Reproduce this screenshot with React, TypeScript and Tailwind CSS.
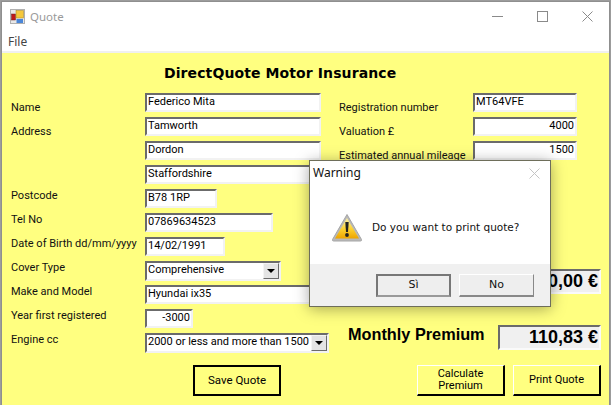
const sans = "font-['Liberation_Sans',Arial,sans-serif]";

const field =
  "h-[19px] bg-white border-2 border-t-[#6b6b6b] border-l-[#6b6b6b] border-r-[#f2f2f2] border-b-[#f2f2f2] text-[11px] leading-[13px] text-black px-px whitespace-nowrap overflow-hidden font-['Roboto',sans-serif]";

const rows = [
  { label: "Name", labelTop: "mt-[7px]", value: "Federico Mita", width: "w-[176px]" },
  { label: "Address", labelTop: "mt-[7px]", value: "Tamworth", width: "w-[176px]" },
  { label: "", labelTop: "mt-0", value: "Dordon", width: "w-[176px]" },
  { label: "", labelTop: "mt-0", value: "Staffordshire", width: "w-[176px]" },
  { label: "Postcode", labelTop: "-mt-px", value: "B78 1RP", width: "w-[72px]" },
  { label: "Tel No", labelTop: "-mt-px", value: "07869634523", width: "w-[128px]" },
  { label: "Date of Birth dd/mm/yyyy", labelTop: "-mt-px", value: "14/02/1991", width: "w-[80px]" },
];

function ComboArrow() {
  return (
    <div className="absolute right-0 top-0 w-[16px] h-[16px] bg-[#e4e4e4] border border-t-[#f4f4f4] border-l-[#f4f4f4] border-r-[#6b6b6b] border-b-[#6b6b6b] flex items-center justify-center">
      <svg width="8" height="4" viewBox="0 0 8 4">
        <path d="M0 0h8L4 4z" fill="#000" />
      </svg>
    </div>
  );
}

function Combo({ value, width }: { value: string; width: string }) {
  return (
    <div className={`relative ${field} h-[20px] ${width}`}>
      {value}
      <ComboArrow />
    </div>
  );
}

function Row({ label, labelTop, children }: { label: string; labelTop: string; children: React.ReactNode }) {
  return (
    <div className="flex items-start h-[24px]">
      <div className={`w-[134px] shrink-0 text-[11px] leading-[16px] whitespace-nowrap ${labelTop}`}>{label}</div>
      {children}
    </div>
  );
}

function WarningIcon() {
  return (
    <svg width="32" height="29" viewBox="0 0 32 29" className="shrink-0">
      <defs>
        <linearGradient id="warn" x1="0" y1="0" x2="0" y2="1">
          <stop offset="0" stopColor="#fff3a8" />
          <stop offset="0.55" stopColor="#fbd030" />
          <stop offset="1" stopColor="#eda400" />
        </linearGradient>
      </defs>
      <path d="M16 1.5 30.5 26.5a1 1 0 0 1-1 1.5H2.5a1 1 0 0 1-1-1.5z" fill="#b9b9b9" stroke="#a6a6a6" />
      <path d="M16 5 28 25.5H4z" fill="url(#warn)" />
      <path d="M14.3 9h3.4l-.7 10h-2z" fill="#222" />
      <circle cx="16" cy="22" r="1.9" fill="#222" />
    </svg>
  );
}

export default function App() {
  return (
    <div className={`relative w-[611px] h-[405px] overflow-hidden bg-[#9c9c9c] pt-px pl-px ${sans}`}>
      <div className="relative w-[609px] h-[404px] border-t border-l border-r border-[#8f8f8f] bg-white">
        {/* Title bar */}
        <div className="h-[28px] flex items-center pl-[8px] pr-[16px]">
          <svg width="15" height="15" viewBox="0 0 15 15" className="shrink-0">
            <rect x="0.5" y="0.5" width="14" height="14" fill="#e8e8e8" stroke="#b0b0b0" />
            <rect x="1.5" y="5" width="4" height="6" fill="#c01818" stroke="#6a2020" strokeWidth="0.5" />
            <rect x="6" y="1.5" width="7.5" height="7.5" fill="#f5c83c" stroke="#a08020" strokeWidth="0.5" />
            <rect x="6.5" y="10" width="6.5" height="4" fill="#4a86d8" />
          </svg>
          <span className="ml-[5px] mt-[2px] text-[11.5px] text-[#9a9a9a] font-['Noto_Sans',sans-serif]">Quote</span>
          <div className="ml-auto flex items-center gap-[34px]">
            <div className="w-[11px] h-px bg-[#8a8a8a]" />
            <div className="w-[11px] h-[11px] border border-[#8a8a8a]" />
            <svg width="11" height="11" viewBox="0 0 11 11">
              <path d="M.5.5l10 10M10.5.5l-10 10" stroke="#8a8a8a" fill="none" />
            </svg>
          </div>
        </div>
        {/* Menu */}
        <div className="h-[21px] pl-[6px] text-[12px] leading-[24px] text-[#444] font-['Noto_Sans',sans-serif]">File</div>
        <div className="h-[2px] bg-[#f0f0f0]" />

        {/* Form */}
        <div className="h-[352px] bg-[#ffff80] text-[#111] font-['Roboto',sans-serif]">
          <div className="h-[40px] pt-[10px] pl-[162px] font-['DejaVu_Sans',sans-serif] font-bold text-[14px] leading-[20px] tracking-[0.1px] text-black whitespace-nowrap">
            DirectQuote Motor Insurance
          </div>
          <div className="flex">
            <div className="w-[337px] pl-[9px] shrink-0">
              {rows.map((r) => (
                <Row key={r.value} label={r.label} labelTop={r.labelTop}>
                  <div className={`${field} ${r.width}`}>{r.value}</div>
                </Row>
              ))}
              <Row label="Cover Type" labelTop="-mt-px">
                <Combo value="Comprehensive" width="w-[136px]" />
              </Row>
              <Row label="Make and Model" labelTop="-mt-px">
                <div className={`${field} w-[176px]`}>Hyundai ix35</div>
              </Row>
              <Row label="Year first registered" labelTop="-mt-px">
                <div className={`${field} w-[48px] text-right`}>-3000</div>
              </Row>
              <Row label="Engine cc" labelTop="-mt-px">
                <Combo value="2000 or less and more than 1500" width="w-[184px]" />
              </Row>
              <button className="mt-[8px] ml-[182px] w-[88px] h-[31px] border-2 border-black text-[11.5px] text-black">
                Save Quote
              </button>
            </div>

            <div className="w-[262px] shrink-0">
              <Row label="Registration number" labelTop="mt-[7px]">
                <div className={`${field} w-[104px]`}>MT64VFE</div>
              </Row>
              <Row label="Valuation £" labelTop="mt-[7px]">
                <div className={`${field} w-[104px] text-right`}>4000</div>
              </Row>
              <Row label="Estimated annual mileage" labelTop="mt-[7px]">
                <div className={`${field} w-[104px] text-right`}>1500</div>
              </Row>
              <div className="mt-[104px] flex justify-end h-[25px]">
                <div className={`w-[103px] h-[25px] bg-[#f0f0f0] border-2 border-t-[#6b6b6b] border-l-[#6b6b6b] border-r-[#fafafa] border-b-[#fafafa] text-right text-[18px] leading-[21px] font-bold text-black pr-px whitespace-nowrap overflow-hidden ${sans}`}>
                  0,00 €
                </div>
              </div>
              <div className={`mt-[31px] flex items-center h-[25px] ${sans}`}>
                <span className="ml-[9px] text-[16.3px] leading-[21px] -mt-[7px] font-bold text-black whitespace-nowrap">Monthly Premium</span>
                <div className="ml-auto w-[103px] h-[25px] bg-[#f0f0f0] border-2 border-t-[#6b6b6b] border-l-[#6b6b6b] border-r-[#fafafa] border-b-[#fafafa] text-right text-[18px] leading-[21px] font-bold text-black pr-px whitespace-nowrap">
                  110,83 €
                </div>
              </div>
              <div className="mt-[15px] flex gap-[8px] pl-[78px]">
                <button className="w-[88px] h-[31px] border border-t-white border-l-white border-r-2 border-b-2 border-r-black border-b-black text-[11px] leading-[12px] text-black">
                  Calculate
                  <br />
                  Premium
                </button>
                <button className="w-[88px] h-[31px] border border-t-white border-l-white border-r-2 border-b-2 border-r-black border-b-black text-[11px] text-black">
                  Print Quote
                </button>
              </div>
            </div>
          </div>
        </div>

        {/* Warning dialog */}
        <div className="absolute left-[307px] top-[158px] w-[242px] h-[147px] bg-white border border-[#6e6e5a] shadow-[0_2px_14px_rgba(0,0,0,0.35)] flex flex-col font-['DejaVu_Sans',sans-serif]">
          <div className="flex items-center justify-between h-[24px] pl-[3px] pr-[10px] text-[12px] text-[#111] font-['Noto_Sans',sans-serif]">
            Warning
            <svg width="11" height="11" viewBox="0 0 11 11">
              <path d="M.5.5l10 10M10.5.5l-10 10" stroke="#c4c4c4" fill="none" />
            </svg>
          </div>
          <div className="flex-1 flex items-center pl-[21px] gap-[9px] pt-[6px]">
            <WarningIcon />
            <span className="text-[10.5px] text-[#111] whitespace-nowrap">Do you want to print quote?</span>
          </div>
          <div className="h-[42px] bg-[#f0f0f0] flex gap-[8px] pl-[66px] pt-[10px]">
            <button className="w-[75px] h-[23px] bg-[#eeeeee] border-2 border-t-[#777] border-l-[#777] border-r-[#777] border-b-[#999] text-[11px] text-[#111]">
              Sì
            </button>
            <button className="w-[75px] h-[23px] bg-[#eeeeee] border border-t-white border-l-white border-r-[#888] border-b-2 border-b-[#888] text-[11px] text-[#111]">
              No
            </button>
          </div>
        </div>
      </div>
    </div>
  );
}
